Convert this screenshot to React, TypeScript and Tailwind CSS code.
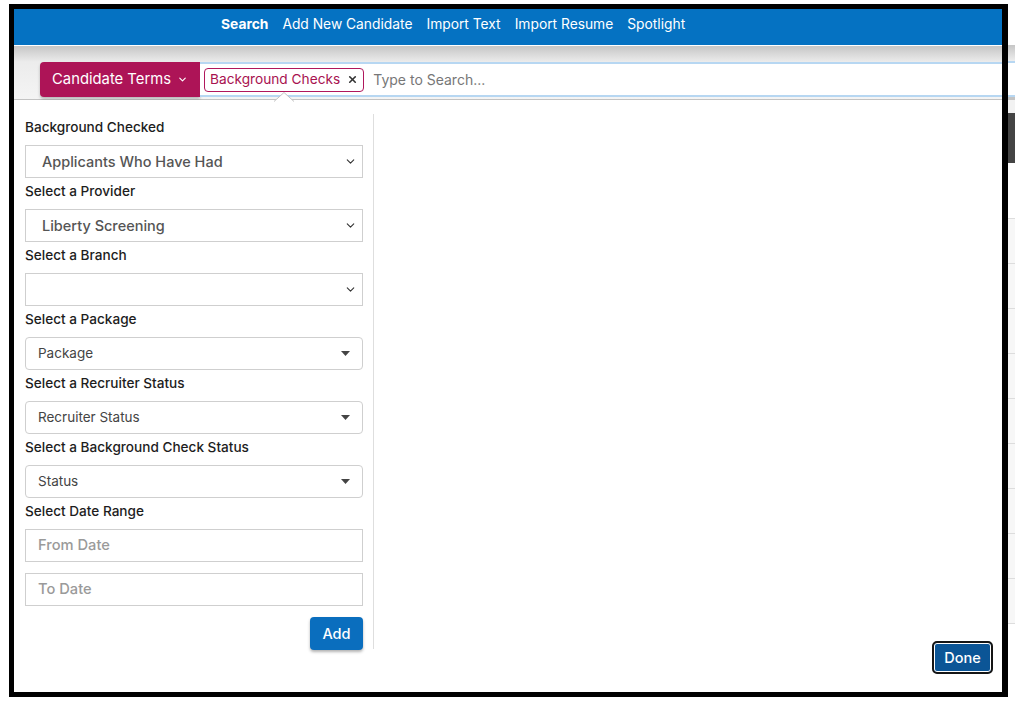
import { ChevronDown, X } from "lucide-react";

const FONT = "font-['Inter','Open_Sans',sans-serif]";

function Label({ children }: { children: React.ReactNode }) {
  return (
    <div className="h-[31px] pt-[5px] leading-[16px] text-[13.6px] font-medium text-[#1d1d1d]">
      {children}
    </div>
  );
}

function NativeSelect({ value }: { value?: string }) {
  return (
    <div className="h-[33px] border border-[#cfcfcf] bg-white flex items-center pl-[16px] pr-[5px]">
      <span className="flex-1 text-[14.5px] font-medium text-[#555]">{value}</span>
      <ChevronDown size={13} strokeWidth={2} className="text-[#333]" />
    </div>
  );
}

function Select2({ placeholder }: { placeholder: string }) {
  return (
    <div className="h-[33px] border border-[#cfcfcf] rounded-[4px] bg-white flex items-center pl-[12px] pr-[12px]">
      <span className="flex-1 text-[13.5px] text-[#444]">{placeholder}</span>
      <svg width="9" height="5" viewBox="0 0 9 5">
        <path d="M0 0h9L4.5 5z" fill="#444" />
      </svg>
    </div>
  );
}

function DateInput({ placeholder }: { placeholder: string }) {
  return (
    <div className="h-[33px] border border-[#cfcfcf] bg-white flex items-center pl-[12px] text-[14.7px] font-medium text-[#9a9a9a]">
      {placeholder}
    </div>
  );
}

export default function App() {
  const nav = ["Add New Candidate", "Import Text", "Import Resume", "Spotlight"];
  return (
    <div className={`w-[1015px] h-[703px] bg-white overflow-hidden flex ${FONT}`}>
      <div className="w-[9px] shrink-0" />
      <div className="w-[999px] shrink-0 pt-[4px]">
        <div className="relative h-[693px] border-t-[5px] border-l-[5px] border-r-[6px] border-b-[5px] border-black flex flex-col">
          {/* top nav */}
          <div className="h-[36px] bg-[#0572c2] flex items-center pb-[6px] pl-[207px] gap-[14px] text-[13.8px] text-white">
            <span className="font-bold">Search</span>
            {nav.map((n) => (
              <span key={n}>{n}</span>
            ))}
          </div>

          {/* search bar */}
          <div className="h-[55px] border-t border-white border-b border-b-[#c3c3c3] bg-gradient-to-b from-[#c6c6c6] via-[#ececec] via-30% to-[#f4f4f4] pt-[16px] pl-[26px] flex">
            <div className="h-[35px] w-[160px] bg-[#ad1457] rounded-l-[4px] shadow-[0_2px_3px_rgba(0,0,0,0.25)] flex items-center justify-center gap-[6px] text-white text-[14.8px]">
              Candidate Terms
              <ChevronDown size={11} strokeWidth={2.5} />
            </div>
            <div className="flex-1 h-[35px] bg-white border-y-2 border-y-[#b7d7f2] flex items-center pl-[4px]">
              <div className="h-[24px] border border-[#b0175c] rounded-[4px] flex items-center px-[5px] gap-[7px]">
                <span className="text-[13.7px] text-[#a8124f]">Background Checks</span>
                <X size={11} strokeWidth={3.5} className="text-[#333]" />
              </div>
              <span className="ml-[9px] text-[14px] text-[#777]">Type to Search...</span>
            </div>
          </div>
          <svg className="absolute left-[260px] top-[83px]" width="20" height="10" viewBox="0 0 20 10">
            <path d="M0 9.5L10 0.5L20 9.5" fill="#fff" stroke="#c3c3c3" strokeWidth="1" />
          </svg>

          {/* panel */}
          <div className="flex-1 bg-white flex pl-[11px] pt-[14px]">
            <div className="w-[338px] flex flex-col">
              <Label>Background Checked</Label>
              <NativeSelect value="Applicants Who Have Had" />
              <Label>Select a Provider</Label>
              <NativeSelect value="Liberty Screening" />
              <Label>Select a Branch</Label>
              <NativeSelect />
              <Label>Select a Package</Label>
              <Select2 placeholder="Package" />
              <Label>Select a Recruiter Status</Label>
              <Select2 placeholder="Recruiter Status" />
              <Label>Select a Background Check Status</Label>
              <Select2 placeholder="Status" />
              <Label>Select Date Range</Label>
              <DateInput placeholder="From Date" />
              <div className="h-[11px]" />
              <DateInput placeholder="To Date" />
              <div className="flex justify-end pt-[11px]">
                <button className="h-[33px] w-[53px] rounded-[4px] bg-[#0a6ebe] text-white text-[14.5px] font-medium shadow-[0_2px_3px_rgba(0,0,0,0.3)]">
                  Add
                </button>
              </div>
            </div>
            <div className="ml-[10px] w-px h-[535px] bg-[#dedede]" />
            <div className="flex-1 flex items-end justify-end pr-[9px] pb-[18px]">
              <button className="h-[33px] w-[61px] rounded-[5px] bg-[#0b5596] border-2 border-[#151515] shadow-[inset_0_0_0_1px_#ffffff] text-white text-[14.5px] font-medium">
                Done
              </button>
            </div>
          </div>
        </div>
      </div>

      {/* background page peeking at right */}
      <div className="w-[7px] shrink-0 flex flex-col">
        <div className="h-[45px]" />
        <div className="h-[16px] bg-gradient-to-b from-[#c6c6c6] to-[#eeeeee]" />
        <div className="h-[36px] border-y-2 border-[#b7d7f2] bg-white" />
        <div className="h-[3px] bg-[#c3c3c3]" />
        <div className="h-[13px] bg-[#f2f2f2]" />
        <div className="h-[50px] bg-[#444]" />
        <div className="h-[56px] bg-white border-b border-[#ddd]" />
        {[0, 1, 2, 3, 4, 5, 6, 7, 8].map((i) => (
          <div key={i} className="h-[45px] bg-[#f7f7f7] border-b border-[#ddd]" />
        ))}
      </div>
    </div>
  );
}
